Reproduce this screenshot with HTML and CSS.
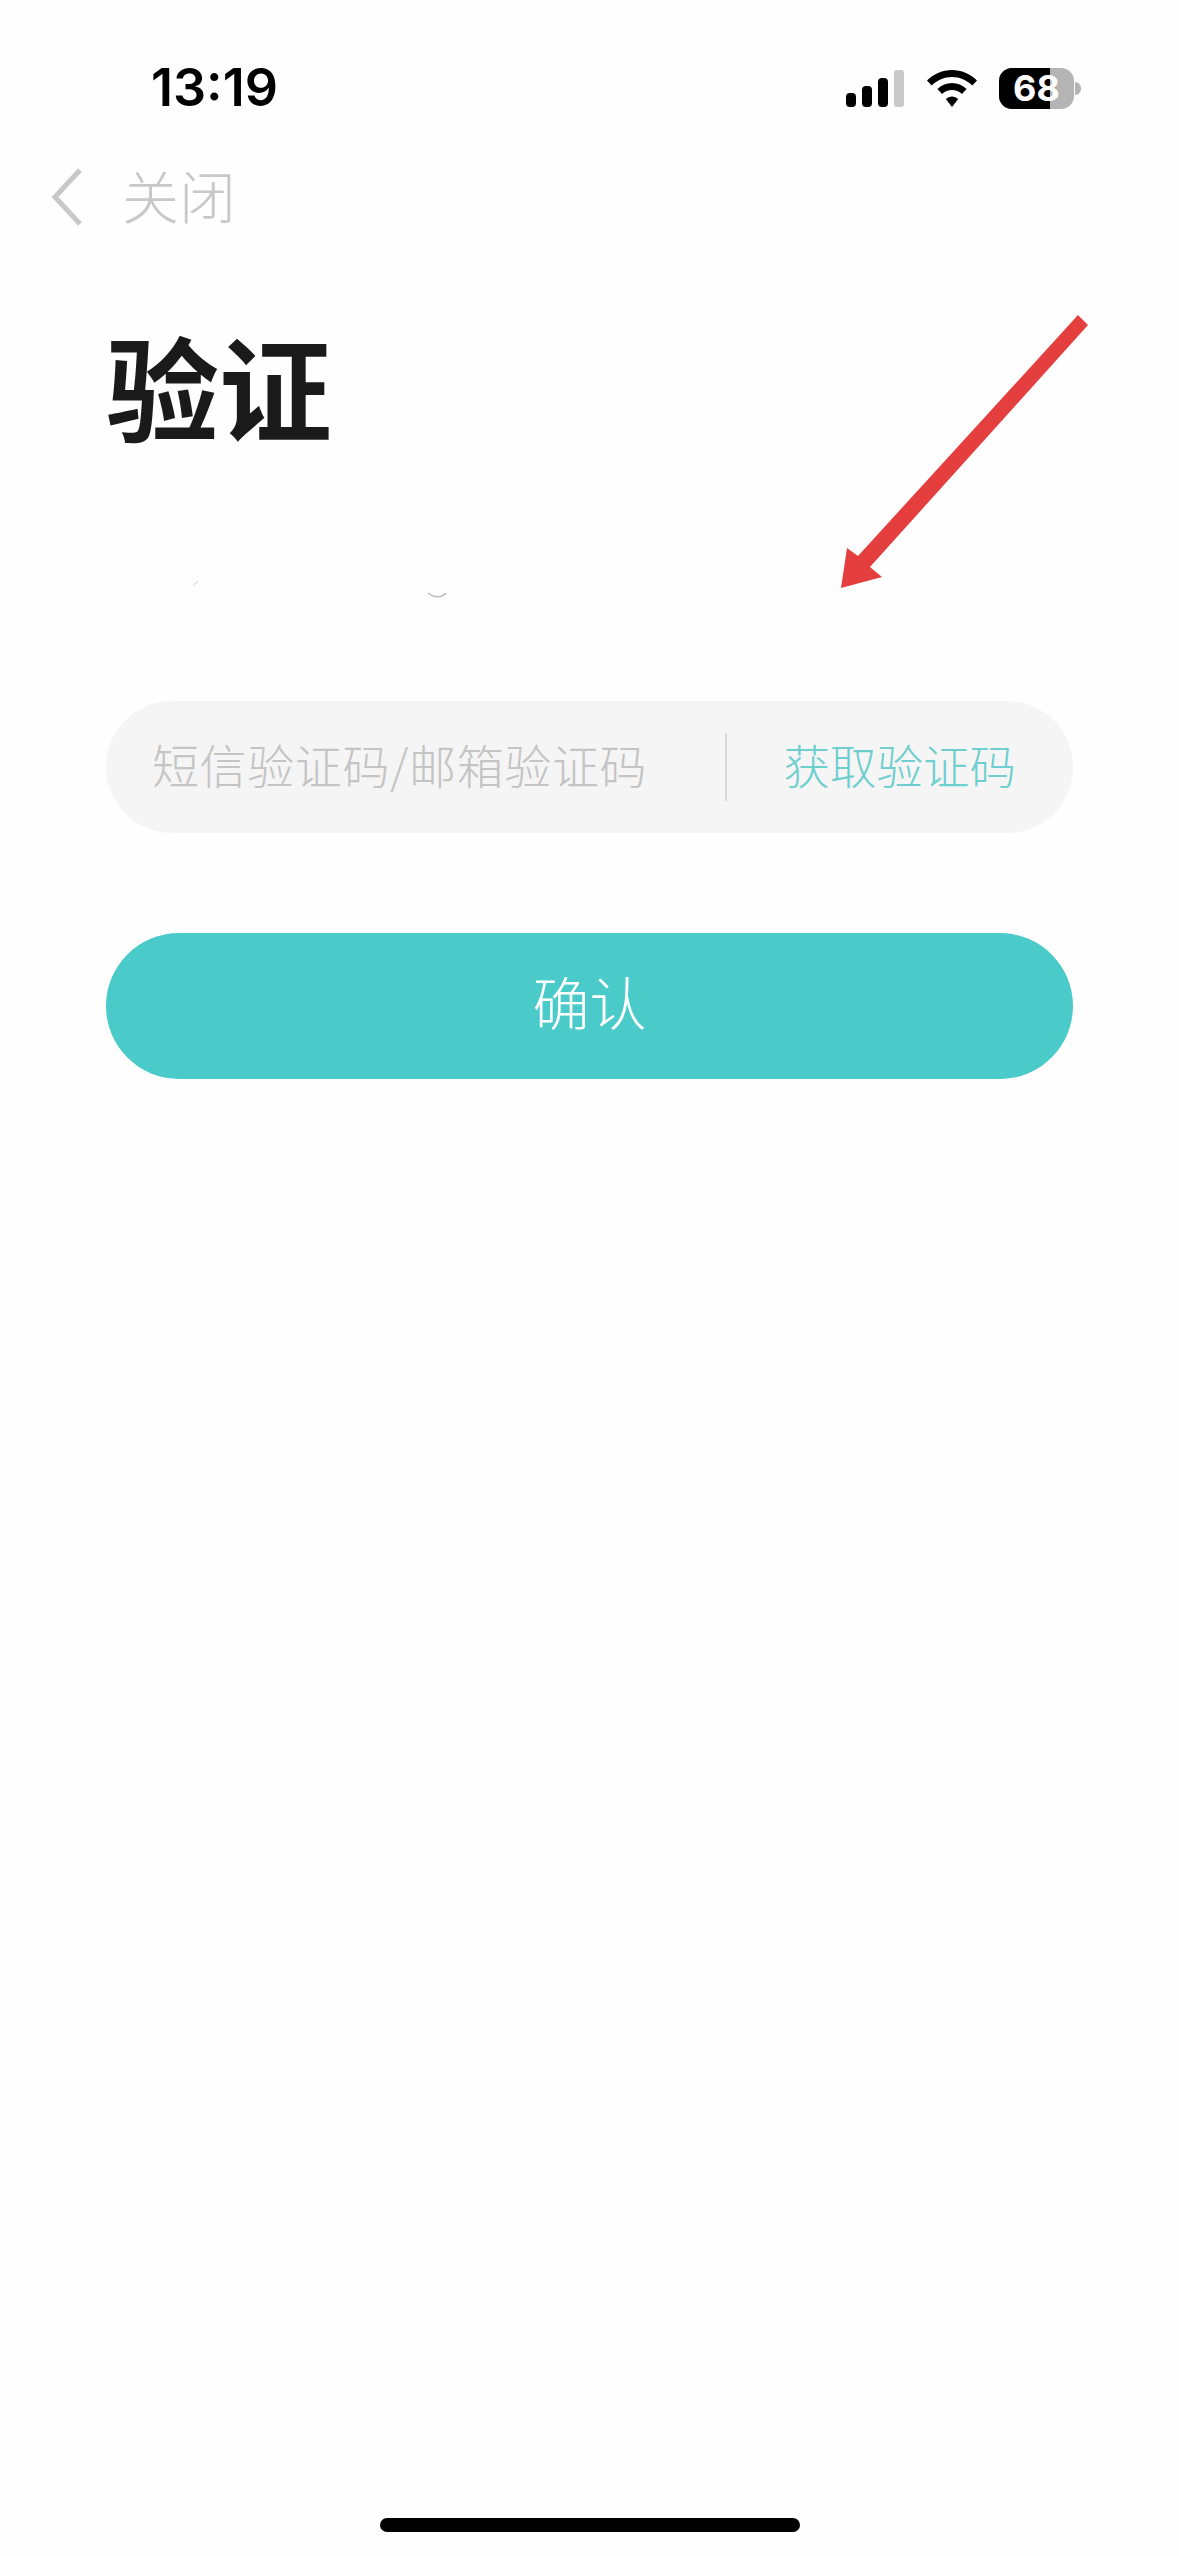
FILE: index.html
```html
<!DOCTYPE html>
<html lang="zh-CN">
<head>
    <meta charset="UTF-8">
    <meta name="viewport" content="width=device-width, initial-scale=1.0">
    <title>验证</title>
    <link rel="stylesheet" href="styles.css">
</head>
<body>
    <div class="screen">
        <div class="status-bar">
            <span class="time">13:19</span>
            <div class="status-icons">
                <svg class="signal" width="58" height="37" viewBox="0 0 58 37">
                    <rect x="0" y="23" width="10" height="14" rx="4" fill="#000"/>
                    <rect x="16" y="16" width="10" height="21" rx="4" fill="#000"/>
                    <rect x="32" y="8" width="10" height="29" rx="4" fill="#000"/>
                    <rect x="48" y="0" width="10" height="37" rx="3" fill="#c9c9c9"/>
                </svg>
                <svg class="wifi" width="50" height="37" viewBox="0 0 50 37">
                    <path d="M25 0C15.500 0 7 3.800 0 10.500L4.700 15.500C10.200 10.300 17.300 7.100 25 7.100S39.800 10.300 45.300 15.500L50 10.500C43 3.800 34.500 0 25 0Z" fill="#000"/>
                    <path d="M25 13C19.500 13 14.500 15.200 10.400 18.900L15 24C17.800 21.500 21.200 20.100 25 20.100S32.200 21.500 35 24L39.600 18.900C35.500 15.200 30.500 13 25 13Z" fill="#000"/>
                    <path d="M25 26.500C22.700 26.500 20.500 27.400 18.800 28.900L25 37L31.200 28.900C29.500 27.400 27.300 26.500 25 26.500Z" fill="#000"/>
                </svg>
                <div class="battery">
                    <div class="battery-body">
                        <div class="battery-fill"></div>
                        <span class="battery-level">68</span>
                    </div>
                    <div class="battery-nub"></div>
                </div>
            </div>
        </div>

        <div class="nav-bar">
            <svg class="back-icon" width="32" height="58" viewBox="0 0 32 58">
                <path d="M29 2L4 29L29 56" fill="none" stroke="#c8c8c8" stroke-width="5"/>
            </svg>
            <span class="close-text">关闭</span>
        </div>

        <div class="content">
            <h1 class="title">验证</h1>
            <div class="account-line">
                <svg width="270" height="30" viewBox="0 0 270 30">
                    <path d="M87 15L92 10" fill="none" stroke="#e2e2e2" stroke-width="1.500"/>
                    <path d="M322 22C328 27 336 27 340 22" fill="none" stroke="#bbb" stroke-width="1.500"/>
                </svg>
            </div>
            <div class="code-field">
                <span class="code-placeholder">短信验证码/邮箱验证码</span>
                <span class="code-divider"></span>
                <span class="code-link">获取验证码</span>
            </div>
            <button class="confirm-btn">确认</button>
        </div>

        <div class="home-indicator"></div>

        <!-- red arrow drawn on top of the screenshot -->
        <svg class="arrow" width="1179" height="700" viewBox="0 0 1179 700">
            <polygon points="1078,315 1088,325 870,567 882,577 841,588 847,548 858,556" fill="#e53e3e"/>
        </svg>
    </div>
</body>
</html>
```

FILE: styles.css
```css
* {
    box-sizing: border-box;
}
body {
    margin: 0;
    background: #fefefe;
    font-family: "Noto Sans CJK SC", "Noto Sans", sans-serif;
}
.screen {
    position: relative;
    display: flex;
    flex-direction: column;
    width: 1179px;
    height: 2556px;
    overflow: hidden;
}
.status-bar {
    display: flex;
    justify-content: space-between;
    align-items: center;
    height: 40px;
    margin-top: 68px;
    padding: 0 98px 0 151px;
}
.time {
    font-family: Inter, sans-serif;
    font-size: 52px;
    font-weight: 600;
    color: #000;
    line-height: 40px;
}
.status-icons {
    display: flex;
    align-items: center;
}
.wifi {
    margin-left: 23px;
}
.battery {
    display: flex;
    align-items: center;
    margin-left: 22px;
}
.battery-body {
    position: relative;
    display: flex;
    justify-content: center;
    align-items: center;
    width: 75px;
    height: 41px;
    background: #b4b4b4;
    border-radius: 13px;
    overflow: hidden;
}
.battery-fill {
    position: absolute;
    top: 0;
    bottom: 0;
    left: 0;
    width: 51px;
    background: #000;
}
.battery-level {
    position: relative;
    font-family: Inter, sans-serif;
    font-size: 36px;
    font-weight: 700;
    color: #fff;
}
.battery-nub {
    width: 6px;
    height: 13px;
    margin-left: 1px;
    background: #b4b4b4;
    border-radius: 0 6px 6px 0;
}
.nav-bar {
    display: flex;
    align-items: center;
    gap: 39px;
    height: 58px;
    margin-top: 60px;
    padding-left: 51px;
}
.close-text {
    padding-bottom: 6px;
    font-size: 57px;
    font-weight: 300;
    color: #c8c8c8;
    line-height: 58px;
}
.content {
    display: flex;
    flex-direction: column;
    padding: 0 106px;
}
.title {
    margin: 93px 0 0;
    font-size: 113px;
    font-weight: 700;
    color: #1a1a1a;
    line-height: 130px;
}
.account-line {
    height: 30px;
    margin-top: 122px;
}
.account-line svg {
    display: block;
    overflow: visible;
}
.code-field {
    display: flex;
    align-items: center;
    height: 132px;
    margin-top: 100px;
    padding: 0 57px 0 46px;
    background: #f5f5f5;
    border-radius: 66px;
}
.code-placeholder {
    flex: 1;
    padding-bottom: 8px;
    font-size: 47px;
    font-weight: 300;
    letter-spacing: 0.6px;
    color: #c4c4c4;
}
.code-divider {
    width: 2px;
    height: 68px;
    margin-right: 57px;
    background: #d8d8d8;
}
.code-link {
    padding-bottom: 8px;
    font-size: 46.5px;
    font-weight: 300;
    color: #6fcfcf;
}
.confirm-btn {
    height: 146px;
    margin-top: 100px;
    padding: 0 0 13px;
    border: none;
    border-radius: 73px;
    background: #4bcaca;
    font-family: inherit;
    font-size: 57px;
    font-weight: 300;
    color: #fff;
}
.home-indicator {
    width: 420px;
    height: 14px;
    margin: auto auto 24px;
    background: #000;
    border-radius: 7px;
}
.arrow {
    position: absolute;
    top: 0;
    left: 0;
}
```
